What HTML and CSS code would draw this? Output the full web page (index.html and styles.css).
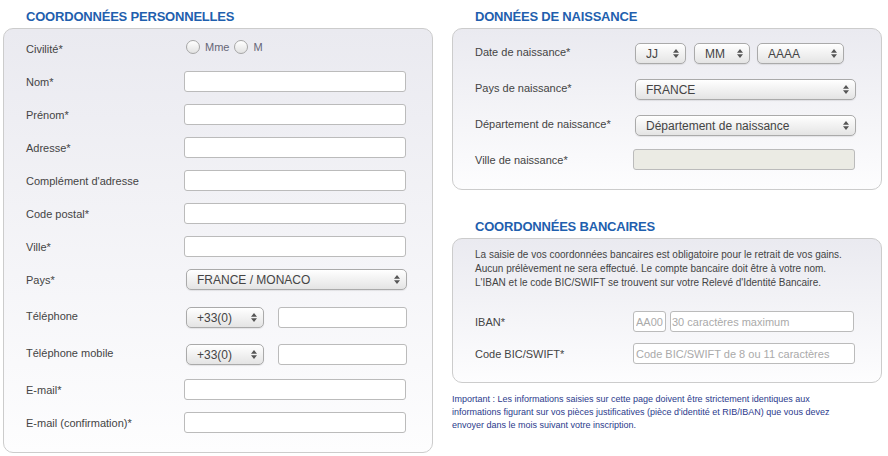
FILE: index.html
```html
<!DOCTYPE html>
<html lang="fr">
<head>
    <meta charset="UTF-8">
    <title>Inscription</title>
    <link rel="stylesheet" href="styles.css">
</head>
<body>

<div class="page">
    <div class="col">
        <h2>COORDONNÉES PERSONNELLES</h2>
        <div class="panel panel-perso">
            <div class="row">
                <label>Civilité*</label>
                <div class="radios">
                    <input type="radio" name="civ" id="mme"><span>Mme</span>
                    <input type="radio" name="civ" id="m"><span>M</span>
                </div>
            </div>
            <div class="row"><label for="nom">Nom*</label><input class="txt" type="text" id="nom"></div>
            <div class="row"><label for="prenom">Prénom*</label><input class="txt" type="text" id="prenom"></div>
            <div class="row"><label for="adresse">Adresse*</label><input class="txt" type="text" id="adresse"></div>
            <div class="row"><label for="complement">Complément d'adresse</label><input class="txt" type="text" id="complement"></div>
            <div class="row"><label for="cp">Code postal*</label><input class="txt" type="text" id="cp"></div>
            <div class="row"><label for="ville">Ville*</label><input class="txt" type="text" id="ville"></div>
            <div class="row row-pays">
                <label for="pays">Pays*</label>
                <span class="sel sel-wide">
                    <select id="pays"><option>FRANCE / MONACO</option></select>
                    <svg width="6" height="9" viewBox="0 0 6 9"><path d="M0 3.8L3 0L6 3.8Z M0 5.2L3 9L6 5.2Z" fill="#555"/></svg>
                </span>
            </div>
            <div class="row row-tel">
                <label for="tel" class="lbl-up">Téléphone</label>
                <span class="sel sel-ind">
                    <select><option>+33(0)</option></select>
                    <svg width="6" height="9" viewBox="0 0 6 9"><path d="M0 3.8L3 0L6 3.8Z M0 5.2L3 9L6 5.2Z" fill="#555"/></svg>
                </span>
                <input class="txt txt-tel" type="text" id="tel">
            </div>
            <div class="row row-mobile">
                <label for="mobile" class="lbl-up">Téléphone mobile</label>
                <span class="sel sel-ind">
                    <select><option>+33(0)</option></select>
                    <svg width="6" height="9" viewBox="0 0 6 9"><path d="M0 3.8L3 0L6 3.8Z M0 5.2L3 9L6 5.2Z" fill="#555"/></svg>
                </span>
                <input class="txt txt-tel" type="text" id="mobile">
            </div>
            <div class="row"><label for="email">E-mail*</label><input class="txt" type="email" id="email"></div>
            <div class="row"><label for="email2">E-mail (confirmation)*</label><input class="txt" type="email" id="email2"></div>
        </div>
    </div>

    <div class="col">
        <h2>DONNÉES DE NAISSANCE</h2>
        <div class="panel panel-naissance">
            <div class="row row-date">
                <label class="lbl-up">Date de naissance*</label>
                <span class="sel sel-jj">
                    <select><option>JJ</option></select>
                    <svg width="6" height="9" viewBox="0 0 6 9"><path d="M0 3.8L3 0L6 3.8Z M0 5.2L3 9L6 5.2Z" fill="#555"/></svg>
                </span>
                <span class="sel sel-mm">
                    <select><option>MM</option></select>
                    <svg width="6" height="9" viewBox="0 0 6 9"><path d="M0 3.8L3 0L6 3.8Z M0 5.2L3 9L6 5.2Z" fill="#555"/></svg>
                </span>
                <span class="sel sel-aaaa">
                    <select><option>AAAA</option></select>
                    <svg width="6" height="9" viewBox="0 0 6 9"><path d="M0 3.8L3 0L6 3.8Z M0 5.2L3 9L6 5.2Z" fill="#555"/></svg>
                </span>
            </div>
            <div class="row row-pn">
                <label class="lbl-up">Pays de naissance*</label>
                <span class="sel sel-wide">
                    <select><option>FRANCE</option></select>
                    <svg width="6" height="9" viewBox="0 0 6 9"><path d="M0 3.8L3 0L6 3.8Z M0 5.2L3 9L6 5.2Z" fill="#555"/></svg>
                </span>
            </div>
            <div class="row row-dept">
                <label class="lbl-up">Département de naissance*</label>
                <span class="sel sel-wide">
                    <select><option>Département de naissance</option></select>
                    <svg width="6" height="9" viewBox="0 0 6 9"><path d="M0 3.8L3 0L6 3.8Z M0 5.2L3 9L6 5.2Z" fill="#555"/></svg>
                </span>
            </div>
            <div class="row">
                <label>Ville de naissance*</label>
                <input class="txt" type="text" disabled>
            </div>
        </div>

        <h2 class="h2-bank">COORDONNÉES BANCAIRES</h2>
        <div class="panel panel-bank">
            <p class="bank-info">La saisie de vos coordonnées bancaires est obligatoire pour le retrait de vos gains.<br>
            Aucun prélèvement ne sera effectué. Le compte bancaire doit être à votre nom.<br>
            L'IBAN et le code BIC/SWIFT se trouvent sur votre Relevé d'Identité Bancaire.</p>
            <div class="row row-iban">
                <label>IBAN*</label>
                <input class="txt txt-cc" type="text" placeholder="AA00">
                <input class="txt txt-iban" type="text" placeholder="30 caractères maximum">
            </div>
            <div class="row">
                <label>Code BIC/SWIFT*</label>
                <input class="txt" type="text" placeholder="Code BIC/SWIFT de 8 ou 11 caractères">
            </div>
        </div>

        <p class="important">Important : Les informations saisies sur cette page doivent être strictement identiques aux<br>
        informations figurant sur vos pièces justificatives (pièce d'identité et RIB/IBAN) que vous devez<br>
        envoyer dans le mois suivant votre inscription.</p>
    </div>
</div>

</body>
</html>
```

FILE: styles.css
```css
body {
    margin: 0;
    font-family: "Liberation Sans", Arial, sans-serif;
    background-color: #fff;
    color: #444;
}
.page {
    display: flex;
    gap: 19px;
    padding-left: 3px;
}
.col {
    width: 430px;
}
h2 {
    font-size: 13px;
    font-weight: bold;
    line-height: 16px;
    letter-spacing: -0.2px;
    color: #1f5fae;
    margin: 9px 0 3px 23px;
}
.h2-bank {
    margin-top: 29px;
}
.panel {
    border: 1px solid #ccc;
    border-radius: 10px;
    background: linear-gradient(#eaeaf0, #fdfdfe);
    padding: 9px 0 19px 22px;
}
.panel-naissance {
    padding-top: 14px;
}
.panel-bank {
    padding-bottom: 18px;
}
.row {
    display: flex;
    align-items: center;
    height: 21px;
    margin-bottom: 12px;
}
.row:last-child {
    margin-bottom: 0;
}
.row label {
    width: 158px;
    flex: none;
    font-size: 11px;
}
.row .lbl-up {
    margin-top: -4px;
}
.row-pays { margin-bottom: 17px; }
.row-tel { margin-bottom: 16px; }
.row-mobile { margin-bottom: 14px; }
.row-date, .row-pn { margin-bottom: 15px; }
.row-dept { margin-bottom: 13px; }
.row-iban { margin-bottom: 11px; }

.txt {
    width: 222px;
    height: 21px;
    box-sizing: border-box;
    border: 1px solid #bbb;
    border-radius: 3px;
    background-color: #fff;
    padding: 0 2px;
    font-family: inherit;
    font-size: 11px;
    color: #444;
}
.txt::placeholder {
    color: #aaa;
}
.txt:disabled {
    background-color: #ebebe4;
}
.txt-tel {
    width: 129px;
    margin-left: 14px;
}
.txt-cc {
    width: 33px;
    margin-right: 4px;
}
.txt-iban {
    width: 184px;
    padding-left: 1px;
}

.radios {
    display: flex;
    align-items: center;
    margin-left: 2px;
    margin-top: -3px;
    font-size: 11px;
    color: #667;
}
.radios input {
    appearance: none;
    width: 14px;
    height: 14px;
    margin: 0 5px 0 0;
    border: 1px solid #a6a6a6;
    border-radius: 50%;
    background: linear-gradient(#fff, #e2e2e2);
}
.radios span {
    margin-right: 5px;
}

.sel {
    position: relative;
    display: inline-block;
    margin-left: 2px;
    height: 21px;
}
.sel select {
    appearance: none;
    width: 100%;
    height: 21px;
    box-sizing: border-box;
    border: 1px solid #aaa;
    border-radius: 5px;
    background: linear-gradient(#fff, #e4e4e4);
    box-shadow: 0 1px 1px rgba(0, 0, 0, 0.08);
    padding: 0 18px 0 10px;
    font-family: inherit;
    font-size: 12px;
    color: #444;
}
.sel svg {
    position: absolute;
    right: 7px;
    top: 6px;
    pointer-events: none;
}
.sel-wide { width: 221px; }
.sel-ind { width: 78px; }
.sel-jj { width: 51px; margin-right: 6px; }
.sel-mm { width: 56px; margin-right: 5px; }
.sel-aaaa { width: 87px; }

.bank-info {
    margin: 0 0 21px 0;
    font-size: 10px;
    line-height: 14px;
    white-space: nowrap;
}
.important {
    margin: 10px 0 0 0;
    font-size: 9px;
    line-height: 13px;
    color: #2b3a8c;
    white-space: nowrap;
}
```
